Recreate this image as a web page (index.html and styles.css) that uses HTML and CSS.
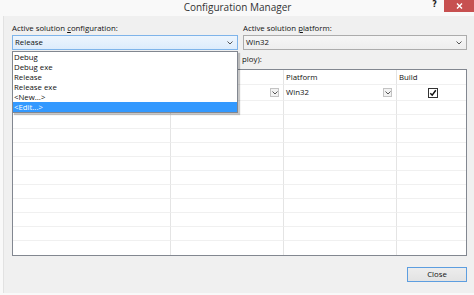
FILE: index.html
```html
<!DOCTYPE html>
<html>
<head>
<meta charset="utf-8">
<link rel="stylesheet" href="styles.css">
</head>
<body>
<div class="window">
  <div class="titlebar">
    <div></div>
    <div class="title">Configuration Manager</div>
    <div class="controls">
      <span class="help">?</span>
      <span class="close"><svg width="7" height="6" viewBox="0 0 7 6"><path d="M1 0.5 L6 5.5 M6 0.5 L1 5.5" stroke="#fff" stroke-width="1.4"/></svg></span>
    </div>
  </div>
  <div class="client">
    <div class="top">
      <div class="field config">
        <div class="label">Active solution <u>c</u>onfiguration:</div>
        <div class="combo-wrap">
          <div class="combo focused"><span>Release</span><svg class="chev" width="6" height="4" viewBox="0 0 6 4"><path d="M0.5 0.5 L3 3 L5.5 0.5" fill="none" stroke="#555" stroke-width="1"/></svg></div>
          <ul class="dropdown">
            <li>Debug</li>
            <li>Debug exe</li>
            <li>Release</li>
            <li>Release exe</li>
            <li>&lt;New...&gt;</li>
            <li class="sel">&lt;Edit...&gt;</li>
          </ul>
        </div>
      </div>
      <div class="field platform">
        <div class="label">Active solution <u>p</u>latform:</div>
        <div class="combo"><span>Win32</span><svg class="chev" width="6" height="4" viewBox="0 0 6 4"><path d="M0.5 0.5 L3 3 L5.5 0.5" fill="none" stroke="#555" stroke-width="1"/></svg></div>
      </div>
    </div>
    <div class="ctx-label"><span class="hidden-part">Project contexts (check the project configurations to build or de</span>ploy):</div>
    <div class="grid">
      <div class="cell head"></div>
      <div class="cell head"></div>
      <div class="cell head">Platform</div>
      <div class="cell head last">Build</div>

      <div class="cell r1"></div>
      <div class="cell r1 cb-cell"><span></span><span class="mini"><svg width="6" height="4" viewBox="0 0 6 4"><path d="M0.5 0.5 L3 3 L5.5 0.5" fill="none" stroke="#555" stroke-width="1"/></svg></span></div>
      <div class="cell r1 cb-cell"><span>Win32</span><span class="mini"><svg width="6" height="4" viewBox="0 0 6 4"><path d="M0.5 0.5 L3 3 L5.5 0.5" fill="none" stroke="#555" stroke-width="1"/></svg></span></div>
      <div class="cell r1 last center"><span class="check"><svg width="8" height="8" viewBox="0 0 8 8"><path d="M1.3 4.2 L3.2 6.2 L6.8 1.3" fill="none" stroke="#111" stroke-width="1.5"/></svg></span></div>

      <div class="cell"></div><div class="cell"></div><div class="cell"></div><div class="cell last"></div>
      <div class="cell"></div><div class="cell"></div><div class="cell"></div><div class="cell last"></div>
      <div class="cell"></div><div class="cell"></div><div class="cell"></div><div class="cell last"></div>
      <div class="cell"></div><div class="cell"></div><div class="cell"></div><div class="cell last"></div>
      <div class="cell"></div><div class="cell"></div><div class="cell"></div><div class="cell last"></div>
      <div class="cell"></div><div class="cell"></div><div class="cell"></div><div class="cell last"></div>
      <div class="cell"></div><div class="cell"></div><div class="cell"></div><div class="cell last"></div>
      <div class="cell"></div><div class="cell"></div><div class="cell"></div><div class="cell last"></div>
      <div class="cell"></div><div class="cell"></div><div class="cell"></div><div class="cell last"></div>
      <div class="cell"></div><div class="cell"></div><div class="cell"></div><div class="cell last"></div>
      <div class="cell end"></div><div class="cell end"></div><div class="cell end"></div><div class="cell last end"></div>
    </div>
    <div class="buttons"><button class="btn">Close</button></div>
  </div>
</div>
</body>
</html>
```

FILE: styles.css
```css
* { box-sizing: border-box; }
html, body { margin: 0; padding: 0; }
body {
  width: 474px;
  height: 295px;
  overflow: hidden;
  font-family: "Open Sans", "Noto Sans", sans-serif;
  font-size: 7.8px;
  color: #111;
}
.window {
  width: 474px;
  height: 295px;
  background: #f9f9f9;
  display: flex;
  flex-direction: column;
  padding-left: 3px;
  padding-bottom: 2px;
}
.titlebar {
  height: 16px;
  display: grid;
  grid-template-columns: 1fr auto 1fr;
  align-items: start;
  margin-left: -3px;
}
.title {
  font-size: 10px;
  line-height: 15px;
  color: #333;
  padding-left: 1px;
}
.controls {
  justify-self: end;
  display: flex;
  align-items: flex-start;
}
.help {
  font-family: "DejaVu Sans", sans-serif;
  font-weight: bold;
  font-size: 8px;
  line-height: 10px;
  color: #222;
  margin-right: 7px;
}
.close {
  width: 30px;
  height: 12px;
  background: #c75050;
  display: flex;
  align-items: center;
  justify-content: center;
}
.client {
  flex: 1;
  background: #f0f0f0;
  border-left: 1px solid #e2e2e2;
  padding: 6px 7px 0 8px;
  display: flex;
  flex-direction: column;
}
.top {
  display: flex;
  gap: 5px;
}
.field.config { width: 226px; }
.field.platform { width: 224px; }
.label {
  line-height: 11px;
  height: 11px;
  margin-top: 1px;
  white-space: nowrap;
}
.label u { text-decoration-thickness: 1px; text-underline-offset: 1px; }
.combo-wrap { position: relative; }
.combo {
  margin-top: 1px;
  height: 15px;
  border: 1px solid #acacac;
  background: linear-gradient(#f6f6f6, #eeeeee);
  display: flex;
  align-items: center;
  justify-content: space-between;
  padding: 0 4px 0 2px;
  line-height: 13px;
}
.combo.focused {
  border-color: #7eb4ea;
  background: linear-gradient(#edf5fd, #dcecfc);
}
.dropdown {
  position: absolute;
  top: 16px;
  left: 0;
  width: 226px;
  margin: 0;
  padding: 0;
  list-style: none;
  background: #fff;
  border: 1px solid #828790;
  box-shadow: 2px 2px 1px rgba(0,0,0,0.22);
  z-index: 10;
}
.dropdown li {
  height: 10px;
  line-height: 10px;
  padding-left: 1px;
}
.dropdown li.sel {
  background: #3399ff;
  color: #fff;
}
.ctx-label {
  margin-top: 4px;
  line-height: 11px;
  height: 11px;
  white-space: nowrap;
}
.hidden-part { visibility: hidden; }
.grid {
  margin-top: 4px;
  width: 455px;
  border: 1px solid #828790;
  background: #fff;
  display: grid;
  grid-template-columns: 158px 113px 113px 69px;
  grid-template-rows: 15px 16px repeat(11, 14px);
}
.cell {
  border-right: 1px solid #e4e4e4;
  border-bottom: 1px solid #f0f0f0;
  padding-left: 2px;
  line-height: 13px;
  white-space: nowrap;
  overflow: hidden;
}
.cell.last { border-right: none; }
.cell.end { border-bottom: none; }
.cell.head { line-height: 14px; }
.cb-cell {
  display: flex;
  align-items: center;
  justify-content: space-between;
  padding-right: 4px;
}
.mini {
  width: 9px;
  height: 9px;
  border: 1px solid #c3c3c3;
  background: #f2f2f2;
  display: flex;
  align-items: center;
  justify-content: center;
}
.center {
  display: flex;
  align-items: center;
  justify-content: center;
}
.check {
  width: 10px;
  height: 10px;
  border: 1px solid #333;
  background: #fff;
  display: flex;
  align-items: center;
  justify-content: center;
}
.buttons {
  margin-top: 11px;
  display: flex;
  justify-content: flex-end;
}
.btn {
  width: 60px;
  height: 15px;
  margin: 0;
  padding: 0;
  font-family: "Open Sans", "Noto Sans", sans-serif;
  font-size: 7.8px;
  color: #111;
  border: 1px solid #5d9ee0;
  background: linear-gradient(#ededed, #e3e3e3);
  line-height: 13px;
}
```
